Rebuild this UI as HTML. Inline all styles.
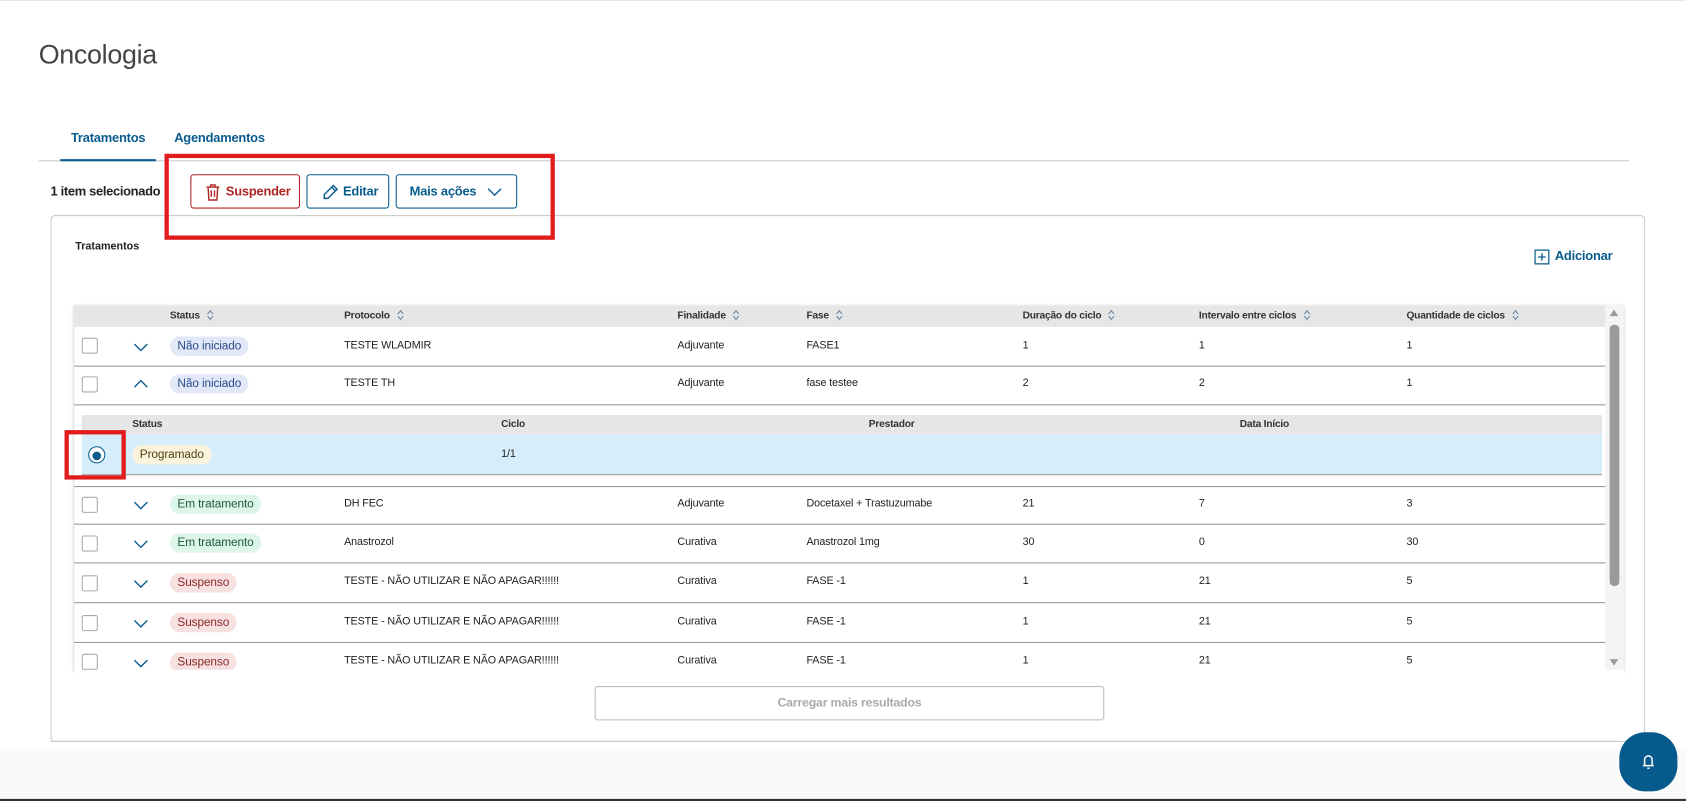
<!DOCTYPE html>
<html><head><meta charset="utf-8"><style>
html,body{margin:0;padding:0;width:1686px;height:801px;overflow:hidden;background:#fff;font-family:"Liberation Sans",sans-serif}
#w{position:absolute;left:0;top:0;width:1568px;height:745px;transform:scale(1.07526);transform-origin:0 0}
.a{position:absolute}
.t{position:absolute;font-size:10px;color:#222;white-space:nowrap;letter-spacing:-.1px}
.h{position:absolute;font-size:9.5px;font-weight:bold;color:#333;white-space:nowrap;letter-spacing:-.2px}
.cb{position:absolute;left:76px;width:13px;height:13px;border:1px solid #aaa;border-radius:2px;background:#fff}
.chev{position:absolute;left:124px;width:14px;height:10px}
.bd{position:absolute;left:158px;height:18px;line-height:18px;border-radius:9px;padding:0 7px;font-size:11px;white-space:nowrap;letter-spacing:-.1px}
.ni{background:#e2e8f7;color:#2a4a8a}.em{background:#def5e9;color:#1e5a38}.su{background:#f7e0e0;color:#8a2828}
.sep{position:absolute;left:69px;width:1424px;height:1px;background:#999}
.btn{position:absolute;top:162px;border:1px solid #0a5c8f;border-radius:3px;color:#0a5c8f;font-size:12px;font-weight:bold;line-height:30px;box-sizing:border-box;height:32px;letter-spacing:-.2px}
.so{display:inline-block;margin-left:6px;vertical-align:middle}
</style></head><body><div id="w">
<div class="a" style="left:0;top:0;width:1568px;height:1px;background:#e8e8e8"></div>
<div class="a" style="left:36px;top:37px;font-size:25px;color:#444;letter-spacing:-.3px">Oncologia</div>
<div class="a" style="left:66px;top:121px;font-size:12px;font-weight:bold;color:#0a5c8f;letter-spacing:-.2px">Tratamentos</div>
<div class="a" style="left:162px;top:121px;font-size:12px;font-weight:bold;color:#0a5c8f;letter-spacing:-.2px">Agendamentos</div>
<div class="a" style="left:36px;top:149px;width:1479px;height:1px;background:#ccc"></div>
<div class="a" style="left:56px;top:148px;width:89px;height:2px;background:#0a5c8f"></div>
<div class="a" style="left:47px;top:171px;font-size:12px;font-weight:bold;color:#222;letter-spacing:-.3px">1 item selecionado</div>

<div class="a" style="left:47px;top:200px;width:1483px;height:490px;border:1px solid #ccc;border-radius:4px;box-sizing:border-box"></div>

<div class="btn" style="left:177px;width:102px;border-color:#b02424;color:#b02424">
<svg class="a" style="left:13px;top:8px" width="14" height="16" viewBox="0 0 14 16" fill="none" stroke="#b02424" stroke-width="1.3"><path d="M1 3h12M5 3V1h4v2M2.5 3l.8 12h7.4l.8-12M5.5 6v6M8.5 6v6"/></svg>
<span class="a" style="left:32px;top:0">Suspender</span></div>
<div class="btn" style="left:285px;width:77px">
<svg class="a" style="left:14px;top:8px" width="15" height="15" viewBox="0 0 15 15" fill="none" stroke="#0a5c8f" stroke-width="1.3"><path d="M10 1.5l3.5 3.5-8.5 8.5H1.5V10z M8.5 3l3.5 3.5"/></svg>
<span class="a" style="left:33px;top:0">Editar</span></div>
<div class="btn" style="left:368px;width:113px">
<span class="a" style="left:12px;top:0">Mais ações</span>
<svg class="a" style="left:84px;top:11px" width="14" height="9" viewBox="0 0 14 9" fill="none" stroke="#0a5c8f" stroke-width="1.3"><path d="M1 1.5l6 6 6-6"/></svg></div>
<div class="a" style="left:153px;top:143px;width:363px;height:80px;border:4px solid #e21c1c;box-sizing:border-box"></div>

<div class="a" style="left:70px;top:224px;font-size:10px;font-weight:bold;color:#222">Tratamentos</div>
<svg class="a" style="left:1427px;top:232px" width="14" height="14" viewBox="0 0 14 14" fill="none" stroke="#0a5c8f" stroke-width="1.2"><rect x=".6" y=".6" width="12.8" height="12.8"/><path d="M7 3.5v7M3.5 7h7"/></svg>
<div class="a" style="left:1446px;top:231px;font-size:12px;font-weight:bold;color:#0a5c8f;letter-spacing:-.2px">Adicionar</div>

<div class="a" style="left:69px;top:284px;width:1441px;height:340px;box-shadow:0 1px 3px rgba(0,0,0,.25);background:#fff"></div>
<div class="a" style="left:69px;top:284px;width:1424px;height:20px;background:#e6e6e6"></div>
<div class="a" style="left:1493px;top:284px;width:17px;height:340px;background:#f4f4f4"></div>
<div class="a" style="left:1497px;top:288px;width:0;height:0;border:4px solid transparent;border-bottom:6px solid #999;border-top:0"></div>
<div class="a" style="left:1497px;top:302px;width:9px;height:243px;background:#9a9a9a;border-radius:4px"></div>
<div class="a" style="left:1497px;top:613px;width:0;height:0;border:4px solid transparent;border-top:6px solid #999;border-bottom:0"></div>

<div class="h" style="left:158px;top:288px">Status<svg class="so" width="7" height="10" viewBox="0 0 7 10" fill="none" stroke="#6a8aa8" stroke-width="1"><path d="M1 4l2.5-3 2.5 3M1 6l2.5 3 2.5-3"/></svg></div>
<div class="h" style="left:320px;top:288px">Protocolo<svg class="so" width="7" height="10" viewBox="0 0 7 10" fill="none" stroke="#6a8aa8" stroke-width="1"><path d="M1 4l2.5-3 2.5 3M1 6l2.5 3 2.5-3"/></svg></div>
<div class="h" style="left:630px;top:288px">Finalidade<svg class="so" width="7" height="10" viewBox="0 0 7 10" fill="none" stroke="#6a8aa8" stroke-width="1"><path d="M1 4l2.5-3 2.5 3M1 6l2.5 3 2.5-3"/></svg></div>
<div class="h" style="left:750px;top:288px">Fase<svg class="so" width="7" height="10" viewBox="0 0 7 10" fill="none" stroke="#6a8aa8" stroke-width="1"><path d="M1 4l2.5-3 2.5 3M1 6l2.5 3 2.5-3"/></svg></div>
<div class="h" style="left:951px;top:288px">Duração do ciclo<svg class="so" width="7" height="10" viewBox="0 0 7 10" fill="none" stroke="#6a8aa8" stroke-width="1"><path d="M1 4l2.5-3 2.5 3M1 6l2.5 3 2.5-3"/></svg></div>
<div class="h" style="left:1115px;top:288px">Intervalo entre ciclos<svg class="so" width="7" height="10" viewBox="0 0 7 10" fill="none" stroke="#6a8aa8" stroke-width="1"><path d="M1 4l2.5-3 2.5 3M1 6l2.5 3 2.5-3"/></svg></div>
<div class="h" style="left:1308px;top:288px">Quantidade de ciclos<svg class="so" width="7" height="10" viewBox="0 0 7 10" fill="none" stroke="#6a8aa8" stroke-width="1"><path d="M1 4l2.5-3 2.5 3M1 6l2.5 3 2.5-3"/></svg></div>

<div class="cb" style="top:314px"></div>
<svg class="chev" style="top:318px" viewBox="0 0 14 10" fill="none" stroke="#0a5c8f" stroke-width="1.3"><path d="M1 2l6 6 6-6"/></svg>
<div class="bd ni" style="top:313px">Não iniciado</div>
<div class="t" style="left:320px;top:316px">TESTE WLADMIR</div><div class="t" style="left:630px;top:316px">Adjuvante</div><div class="t" style="left:750px;top:316px">FASE1</div><div class="t" style="left:951px;top:316px">1</div><div class="t" style="left:1115px;top:316px">1</div><div class="t" style="left:1308px;top:316px">1</div>
<div class="sep" style="top:340px"></div>
<div class="cb" style="top:350px"></div>
<svg class="chev" style="top:352px" viewBox="0 0 14 10" fill="none" stroke="#0a5c8f" stroke-width="1.3"><path d="M1 8l6-6 6 6"/></svg>
<div class="bd ni" style="top:348px">Não iniciado</div>
<div class="t" style="left:320px;top:351px">TESTE TH</div><div class="t" style="left:630px;top:351px">Adjuvante</div><div class="t" style="left:750px;top:351px">fase testee</div><div class="t" style="left:951px;top:351px">2</div><div class="t" style="left:1115px;top:351px">2</div><div class="t" style="left:1308px;top:351px">1</div>
<div class="sep" style="top:376px"></div>
<div class="a" style="left:76px;top:386px;width:1414px;height:18px;background:#e6e6e6"></div>
<div class="h" style="left:123px;top:389px">Status</div><div class="h" style="left:466px;top:389px">Ciclo</div><div class="h" style="left:808px;top:389px">Prestador</div><div class="h" style="left:1153px;top:389px">Data Início</div>
<div class="a" style="left:76px;top:404px;width:1414px;height:37px;background:#d6eefb"></div>
<div class="a" style="left:76px;top:441px;width:1414px;height:1px;background:#999"></div>
<div class="a" style="left:82px;top:415px;width:14px;height:14px;border:1.3px solid #0a5c8f;border-radius:50%;background:#fff"></div>
<div class="a" style="left:86px;top:419.5px;width:8px;height:8px;border-radius:50%;background:#0a5c8f"></div>
<div class="a" style="left:60px;top:400px;width:57px;height:46px;border:4px solid #e21c1c;box-sizing:border-box"></div>
<div class="bd" style="left:123px;top:414px;background:#fbf3db;color:#4e4218">Programado</div>
<div class="t" style="left:466px;top:417px">1/1</div>
<div class="sep" style="top:452px"></div>
<div class="cb" style="top:462px"></div>
<svg class="chev" style="top:465px" viewBox="0 0 14 10" fill="none" stroke="#0a5c8f" stroke-width="1.3"><path d="M1 2l6 6 6-6"/></svg>
<div class="bd em" style="top:460px">Em tratamento</div>
<div class="t" style="left:320px;top:463px">DH FEC</div><div class="t" style="left:630px;top:463px">Adjuvante</div><div class="t" style="left:750px;top:463px">Docetaxel + Trastuzumabe</div><div class="t" style="left:951px;top:463px">21</div><div class="t" style="left:1115px;top:463px">7</div><div class="t" style="left:1308px;top:463px">3</div>
<div class="sep" style="top:487px"></div>
<div class="cb" style="top:498px"></div>
<svg class="chev" style="top:501px" viewBox="0 0 14 10" fill="none" stroke="#0a5c8f" stroke-width="1.3"><path d="M1 2l6 6 6-6"/></svg>
<div class="bd em" style="top:496px">Em tratamento</div>
<div class="t" style="left:320px;top:499px">Anastrozol</div><div class="t" style="left:630px;top:499px">Curativa</div><div class="t" style="left:750px;top:499px">Anastrozol 1mg</div><div class="t" style="left:951px;top:499px">30</div><div class="t" style="left:1115px;top:499px">0</div><div class="t" style="left:1308px;top:499px">30</div>
<div class="sep" style="top:523px"></div>
<div class="cb" style="top:535px"></div>
<svg class="chev" style="top:538px" viewBox="0 0 14 10" fill="none" stroke="#0a5c8f" stroke-width="1.3"><path d="M1 2l6 6 6-6"/></svg>
<div class="bd su" style="top:533px">Suspenso</div>
<div class="t" style="left:320px;top:535px">TESTE - NÃO UTILIZAR E NÃO APAGAR!!!!!!</div><div class="t" style="left:630px;top:535px">Curativa</div><div class="t" style="left:750px;top:535px">FASE -1</div><div class="t" style="left:951px;top:535px">1</div><div class="t" style="left:1115px;top:535px">21</div><div class="t" style="left:1308px;top:535px">5</div>
<div class="sep" style="top:560px"></div>
<div class="cb" style="top:572px"></div>
<svg class="chev" style="top:575px" viewBox="0 0 14 10" fill="none" stroke="#0a5c8f" stroke-width="1.3"><path d="M1 2l6 6 6-6"/></svg>
<div class="bd su" style="top:570px">Suspenso</div>
<div class="t" style="left:320px;top:573px">TESTE - NÃO UTILIZAR E NÃO APAGAR!!!!!!</div><div class="t" style="left:630px;top:573px">Curativa</div><div class="t" style="left:750px;top:573px">FASE -1</div><div class="t" style="left:951px;top:573px">1</div><div class="t" style="left:1115px;top:573px">21</div><div class="t" style="left:1308px;top:573px">5</div>
<div class="sep" style="top:597px"></div>
<div class="cb" style="top:608px"></div>
<svg class="chev" style="top:612px" viewBox="0 0 14 10" fill="none" stroke="#0a5c8f" stroke-width="1.3"><path d="M1 2l6 6 6-6"/></svg>
<div class="bd su" style="top:607px">Suspenso</div>
<div class="t" style="left:320px;top:609px">TESTE - NÃO UTILIZAR E NÃO APAGAR!!!!!!</div><div class="t" style="left:630px;top:609px">Curativa</div><div class="t" style="left:750px;top:609px">FASE -1</div><div class="t" style="left:951px;top:609px">1</div><div class="t" style="left:1115px;top:609px">21</div><div class="t" style="left:1308px;top:609px">5</div>
<div class="a" style="left:69px;top:623px;width:1441px;height:14px;background:#fff"></div>

<div class="a" style="left:553px;top:638px;width:474px;height:32px;border:1px solid #bbb;border-radius:3px;box-sizing:border-box;text-align:center;line-height:30px;font-size:11.5px;font-weight:bold;color:#aaa;letter-spacing:-.2px">Carregar mais resultados</div>
<div class="a" style="left:47px;top:689px;width:1483px;height:1px;background:#ccc"></div>
<div class="a" style="left:0;top:697px;width:1568px;height:46px;background:#fafafa"></div>
<div class="a" style="left:0;top:743px;width:1568px;height:2px;background:#333"></div>
<div class="a" style="left:1506px;top:681px;width:54px;height:55px;border-radius:24px;background:#065a8c"></div>
<svg class="a" style="left:1526px;top:700px" width="14" height="16" viewBox="0 0 14 16" fill="none" stroke="#fff" stroke-width="1.4"><path d="M3.5 12V6.5a3.5 3.5 0 0 1 7 0V12M2 12h10M6 14.5h2"/></svg>
</div></body></html>
